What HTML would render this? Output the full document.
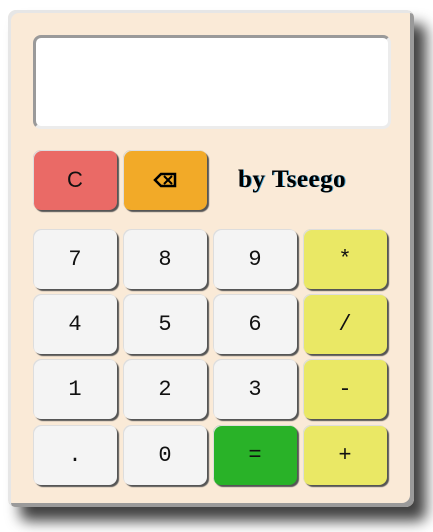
<!DOCTYPE html>
<html><head><style>
html,body{margin:0;padding:0;background:#fff;width:433px;height:532px;overflow:hidden}
.calc{position:absolute;left:8px;top:10px;width:406px;height:497px;background:#faead7;border-radius:8px;
box-shadow:inset 3px 3px 0 #e6e6e6, inset -4px -4px 0 #9a9a9a, 12px 14px 14px rgba(0,0,0,0.75);}
.disp{position:absolute;left:33px;top:35px;width:358px;height:94px;background:#fff;border-radius:8px;box-sizing:border-box;
border-top:3px solid #9a9a9a;border-left:3px solid #9a9a9a;border-right:3px solid #ececec;border-bottom:3px solid #ececec}
.b{position:absolute;width:84px;height:60px;border-radius:8px;box-sizing:border-box;display:flex;align-items:center;justify-content:center;
font-family:"Liberation Mono",monospace;font-size:22px;color:#111;background:#f4f4f4;
box-shadow:2px 2px 1px #555, inset 1px 1px 0 #ddd}
.r{background:#ea6a66}.o{background:#f2aa28}.y{background:#eae865}.g{background:#29b228}
.by{position:absolute;left:238px;top:166px;font-family:"Liberation Serif",serif;font-weight:bold;font-size:25px;color:#000;
text-shadow:1px 0 0 #3aa0d8;letter-spacing:0.5px}
</style></head><body>
<div class="calc"></div>
<div class="disp"></div>
<div class="b r" style="left:33px;top:150px;font-family:'Liberation Sans',sans-serif">C</div>
<div class="b o" style="left:123px;top:150px"><svg width="24" height="16" viewBox="0 0 24 16"><path d="M2 8 L8 2 H22 V14 H8 Z" fill="none" stroke="#000" stroke-width="2.5"/><path d="M11 4 L19 12 M19 4 L11 12" stroke="#000" stroke-width="2"/></svg></div>
<div class="by">by Tseego</div>

<div class="b" style="left:33px;top:229px">7</div>
<div class="b" style="left:123px;top:229px">8</div>
<div class="b" style="left:213px;top:229px">9</div>
<div class="b y" style="left:303px;top:229px">*</div>

<div class="b" style="left:33px;top:294px">4</div>
<div class="b" style="left:123px;top:294px">5</div>
<div class="b" style="left:213px;top:294px">6</div>
<div class="b y" style="left:303px;top:294px">/</div>

<div class="b" style="left:33px;top:359px">1</div>
<div class="b" style="left:123px;top:359px">2</div>
<div class="b" style="left:213px;top:359px">3</div>
<div class="b y" style="left:303px;top:359px">-</div>

<div class="b" style="left:33px;top:425px">.</div>
<div class="b" style="left:123px;top:425px">0</div>
<div class="b g" style="left:213px;top:425px">=</div>
<div class="b y" style="left:303px;top:425px">+</div>
</body></html>
